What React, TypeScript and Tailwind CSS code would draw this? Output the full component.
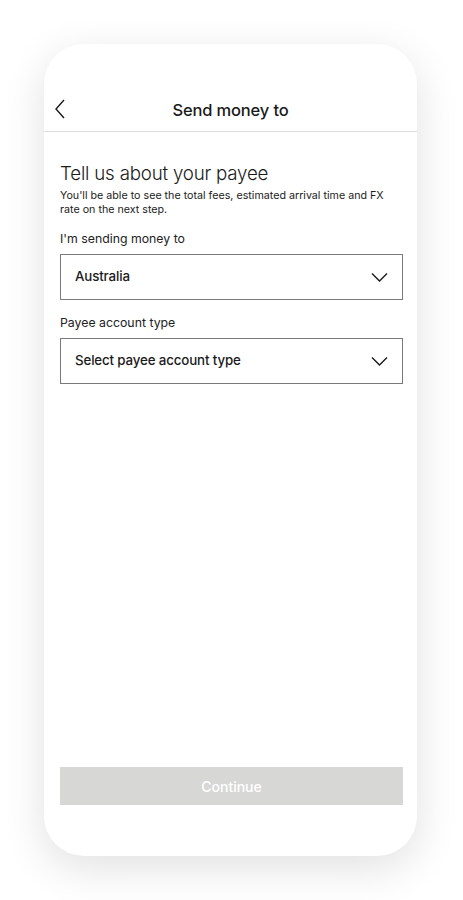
const font = { fontFamily: "Inter, 'Liberation Sans', sans-serif" };

const SelectField = ({ label, value }: { label: string; value: string }) => (
  <div className="flex flex-col">
    <label className="text-[12.3px] leading-4 text-[#222] mb-[7px]">{label}</label>
    <button className="h-[46px] w-full border border-[#7a7a7a] flex items-center justify-between pl-[14px] pr-[14px] text-left">
      <span className="text-[13.3px] font-medium tracking-[-0.01em] text-[#1a1a1a]">{value}</span>
      <svg width="17" height="10" viewBox="0 0 17 10" fill="none" className="text-[#1a1a1a]">
        <path d="M1 1.5l7.5 7.5 7.5-7.5" stroke="currentColor" strokeWidth="1.4" />
      </svg>
    </button>
  </div>
);

const App = () => {
  return (
    <div className="min-h-[900px] bg-white flex pl-[44px] pt-[44px]" style={font}>
      <div className="w-[373px] h-[812px] bg-white rounded-[40px] shadow-[0_12px_44px_rgba(0,0,0,0.12)] flex flex-col overflow-hidden">
        <header className="h-[88px] flex items-end border-b border-[#dcdcdc]">
          <div className="relative h-[42px] w-full flex items-center justify-center">
            <button className="absolute left-[9px] top-[9px] text-[#1a1a1a]">
              <svg width="14" height="22" viewBox="0 0 14 22" fill="none">
                <path d="M11 2L3 11l8 9" stroke="currentColor" strokeWidth="1.4" />
              </svg>
            </button>
            <h1 className="text-[16.5px] font-medium tracking-[-0.01em] text-[#1a1a1a]">Send money to</h1>
          </div>
        </header>

        <main className="flex-1 flex flex-col pl-[16px] pr-[14px] pt-[29px]">
          <h2 className="text-[18.7px] font-light leading-[26px] tracking-[-0.01em] text-[#1a1a1a]">
            Tell us about your payee
          </h2>
          <p className="text-[10.7px] leading-[14px] text-[#222] mt-[2px]">
            You'll be able to see the total fees, estimated arrival time and FX rate on the next step.
          </p>

          <div className="mt-[14px] flex flex-col gap-[15px]">
            <SelectField label="I'm sending money to" value="Australia" />
            <SelectField label="Payee account type" value="Select payee account type" />
          </div>

          <div className="mt-auto mb-[51px]">
            <button className="w-full h-[38px] bg-[#d7d7d6] text-white text-[14px] font-medium">Continue</button>
          </div>
        </main>
      </div>
    </div>
  );
};

export default App;
